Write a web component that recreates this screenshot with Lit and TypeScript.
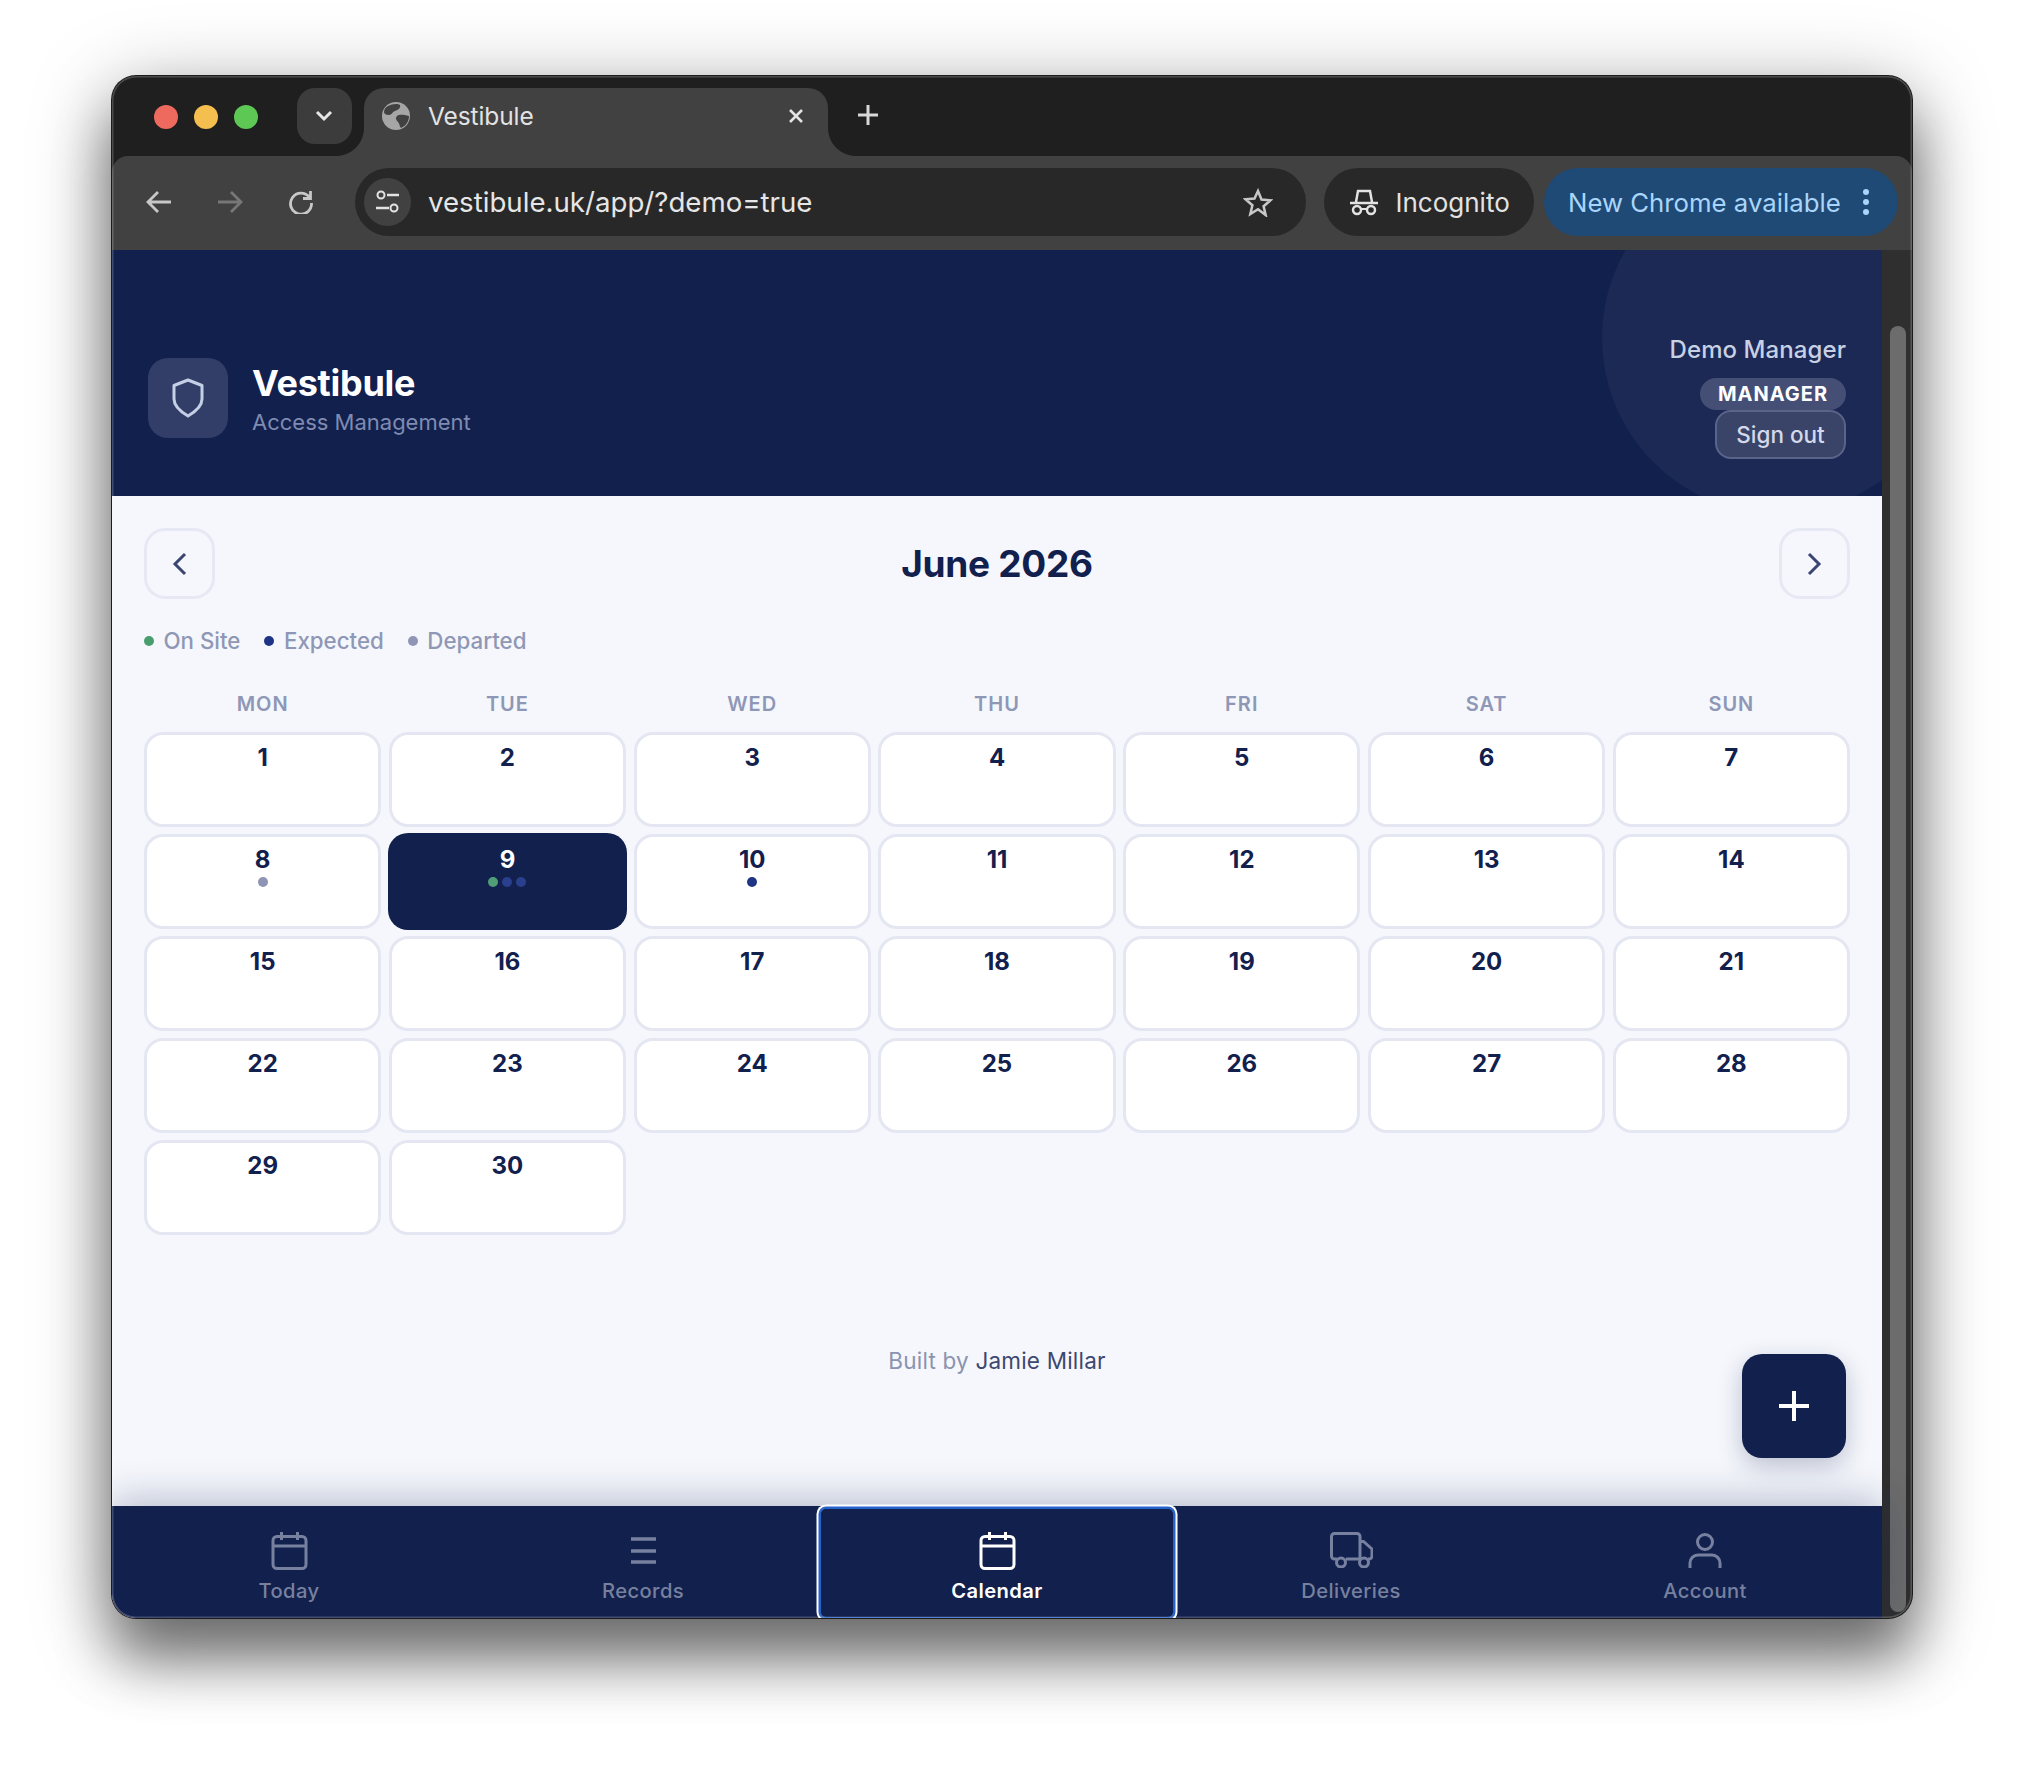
import { LitElement, html, css, svg } from "lit";
import { customElement } from "lit/decorators.js";

type Dot = "on" | "exp" | "dep";
const DAY_DOTS: Record<number, Dot[]> = { 8: ["dep"], 9: ["on", "exp", "exp"], 10: ["exp"] };
const WEEK = ["MON", "TUE", "WED", "THU", "FRI", "SAT", "SUN"];
const DAYS = Array.from({ length: 30 }, (_, i) => i + 1);

const calIcon = svg`<rect x="2" y="5.500" width="33" height="32" rx="4" fill="none" stroke="currentColor" stroke-width="3"/><path d="M2 15h33M10.500 1v8M26.500 1v8" fill="none" stroke="currentColor" stroke-width="3"/>`;

@customElement("app-root")
export class AppRoot extends LitElement {
  static styles = css`
    :host { display: block; width: 2024px; height: 1766px; background: #fff; padding: 76px 112px 148px 112px; box-sizing: border-box; font-family: Inter, "Liberation Sans", sans-serif; overflow: hidden; }
    * { box-sizing: border-box; }
    svg { display: block; flex: none; }
    .win { position: relative; height: 100%; border-radius: 24px; display: flex; flex-direction: column; background: #1f1f1f; box-shadow: 0 0 0 1px #1b1b1b, 0 44px 56px rgba(0,0,0,.42), 0 16px 80px rgba(0,0,0,.38); }
    .clip { flex: 1; min-height: 0; display: flex; flex-direction: column; overflow: hidden; border-radius: 24px; }
    .win::after { content: ""; position: absolute; inset: 0; border-radius: 24px; box-shadow: inset 0 0 0 1.500px rgba(255,255,255,.2); pointer-events: none; z-index: 5; }

    .strip { height: 80px; flex: none; background: #1f1f1f; display: flex; align-items: flex-start; padding: 12px 0 0 42px; }
    .lights { display: flex; gap: 16px; margin-top: 17px; width: 142.500px; }
    .light { width: 24px; height: 24px; border-radius: 50%; }
    .red { background: #ee6a5f; } .yellow { background: #f5bf4f; } .green { background: #5ec854; }
    .tabmenu { width: 55px; height: 56px; border-radius: 18px; background: #3c3c3c; display: flex; align-items: center; justify-content: center; position: relative; z-index: 1; color: #e6e6e6; }
    .tab { position: relative; margin-left: 12.500px; width: 464px; height: 68px; background: #414141; border-radius: 20px 20px 0 0; display: flex; align-items: flex-start; padding: 14px 24px 0 18px; color: #e3e3e3; font-size: 24.500px; }
    .tab::before, .tab::after { content: ""; position: absolute; bottom: 0; width: 28px; height: 28px; }
    .tab::before { left: -28px; background: radial-gradient(circle at 0 0, #1f1f1f 27.500px, #414141 28.500px); }
    .tab::after { right: -28px; background: radial-gradient(circle at 100% 0, #1f1f1f 27.500px, #414141 28.500px); }
    .tab-title { margin-left: 18px; flex: 1; line-height: 28px; letter-spacing: -.1px; }
    .tab-close { margin-top: 6px; }
    .newtab { margin: 16px 0 0 29px; color: #d8d8d8; }

    .toolbar { height: 94px; flex: none; background: #414141; border-radius: 16px 16px 0 0; display: flex; align-items: center; padding: 0 14px 2px 34px; }
    .navbtns { display: flex; align-items: center; width: 209px; gap: 45px; }
    .omni { width: 951px; height: 68px; border-radius: 34px; background: #282828; display: flex; align-items: center; padding: 0 33px 0 9px; color: #e6e6e6; }
    .site { width: 47px; height: 48px; border-radius: 50%; background: #414141; display: flex; align-items: center; justify-content: center; }
    .url { margin-left: 17px; flex: 1; font-size: 27.650px; white-space: nowrap; }
    .pill { height: 68px; border-radius: 34px; display: flex; align-items: center; white-space: nowrap; }
    .incog { width: 210px; margin-left: 18px; background: #282828; color: #e3e3e3; padding-left: 25px; gap: 16.500px; font-size: 26px; }
    .update { width: 354px; margin-left: 10px; background: #1f4a75; color: #a9d5fb; padding-left: 24px; gap: 22px; font-size: 25.750px; }
    .dots3 { display: flex; flex-direction: column; gap: 4px; }
    .dots3 i { display: block; width: 6px; height: 6px; border-radius: 50%; background: #a9d5fb; }

    .view { flex: 1; min-height: 0; display: flex; }
    .app { flex: 1; min-width: 0; display: flex; flex-direction: column; background: #f5f7fc; }
    .scroll { width: 30px; flex: none; background: #2f2f2f; padding: 76px 6px 6px 8px; }
    .thumb { height: 100%; border-radius: 8px; background: #6c6c6c; }

    .hdr { position: relative; overflow: hidden; height: 246px; flex: none; background: #12204e; display: flex; align-items: center; justify-content: space-between; padding: 50px 36px 0; }
    .hdr::before { content: ""; position: absolute; width: 352px; height: 352px; border-radius: 50%; right: -72px; top: -88px; background: rgba(255,255,255,.045); }
    .brand { display: flex; align-items: center; gap: 24px; position: relative; }
    .logo { width: 80px; height: 80px; border-radius: 20px; background: #323e68; display: flex; align-items: center; justify-content: center; }
    .title { color: #fff; font-size: 36px; font-weight: 700; line-height: 44px; letter-spacing: -.25px; }
    .sub { color: #7f8bb0; font-size: 22px; line-height: 28px; margin-top: 3px; }
    .user { display: flex; flex-direction: column; align-items: flex-end; position: relative; margin-top: -5px; }
    .uname { color: #c8d0e4; font-size: 24px; font-weight: 500; line-height: 36px; margin-bottom: 10px; letter-spacing: .08px; }
    .badge { height: 32px; width: 146px; border-radius: 16px; background: #454f76; color: #fff; font-size: 20px; font-weight: 700; letter-spacing: 1px; display: flex; align-items: center; justify-content: center; }
    .signout { height: 49px; width: 131px; border-radius: 16px; background: #3a4469; border: 2px solid #5a6489; color: #d3d9ea; font-size: 22.500px; font-weight: 500; display: flex; align-items: center; justify-content: center; }

    .main { position: relative; flex: 1; min-height: 0; padding: 32px 32px 0; }
    .mhead { display: flex; align-items: center; justify-content: space-between; }
    .arrow { width: 71px; height: 71px; border-radius: 21px; border: 3px solid #e6e9f3; display: flex; align-items: center; justify-content: center; color: #3a4672; }
    .month { color: #12204e; font-size: 37px; font-weight: 700; letter-spacing: -.3px; }
    .legend { display: flex; margin-top: 26.500px; height: 30px; align-items: center; color: #8f97b6; font-size: 22.300px; font-weight: 500; }
    .lg { display: flex; align-items: center; gap: 9.500px; margin-right: 24px; }
    .ldot { width: 10px; height: 10px; border-radius: 50%; }
    .on { background: #4a9e6e; } .exp { background: #1e3585; } .dep { background: #8f96b5; }
    .today .on { background: #4f9e78; } .today .exp { background: #2a3f8d; }
    .week { display: grid; grid-template-columns: repeat(7, 1fr); column-gap: 7.500px; margin-top: 36.500px; height: 40px; color: #8f97b6; font-size: 20px; font-weight: 600; letter-spacing: 1px; text-align: center; line-height: 24px; }
    .grid { display: grid; grid-template-columns: repeat(7, 1fr); column-gap: 7.500px; row-gap: 7px; grid-auto-rows: 95px; }
    .cell { background: #fff; border: 3px solid #e4e7f2; border-radius: 19px; display: flex; flex-direction: column; align-items: center; padding-top: 7.500px; color: #12204e; font-size: 24px; font-weight: 700; line-height: 30px; }
    .cell.today { background: #12204e; border-color: #12204e; color: #fff; box-shadow: 0 0 0 1px #12204e; }
    .ddots { display: flex; gap: 4px; margin-top: 2.500px; }
    .ddot { width: 10px; height: 10px; border-radius: 50%; }
    .foot { margin-top: 111px; text-align: center; font-size: 22.500px; line-height: 30px; color: #8a93b0; letter-spacing: .2px; }
    .foot b { font-weight: 400; color: #3d4870; }
    .fab { position: absolute; right: 36px; bottom: 48px; width: 104px; height: 104px; border-radius: 20px; background: #12204e; color: #fff; display: flex; align-items: center; justify-content: center; box-shadow: 0 8px 24px rgba(18,32,78,.25); }

    .nav { height: 112px; flex: none; background: #12204e; display: flex; position: relative; box-shadow: 0 -4px 40px rgba(18,32,78,.3); }
    .item { flex: 1; display: flex; flex-direction: column; align-items: center; padding-top: 24px; color: #77819f; font-size: 20.200px; font-weight: 500; letter-spacing: .4px; }
    .item .ic { height: 40px; display: flex; align-items: center; justify-content: center; }
    .item span { line-height: 28px; margin-top: 6.500px; }
    .item.active { color: #fff; font-weight: 600; border-radius: 6px; position: relative; z-index: 1; margin-top: 1.500px; padding-top: 22.500px; box-shadow: inset 0 0 0 1px #2463c9, 0 0 0 1.500px #2463c9, 0 0 0 3.500px #fff; }
  `;

  private dayCell(d: number) {
    const dots = DAY_DOTS[d] ?? [];
    return html`<div class="cell ${d === 9 ? "today" : ""}">
      ${d}
      ${dots.length ? html`<div class="ddots">${dots.map((k) => html`<i class="ddot ${k}"></i>`)}</div>` : ""}
    </div>`;
  }

  private navItem(label: string, icon: unknown, w: number, h: number, active = false) {
    return html`<div class="item ${active ? "active" : ""}">
      <div class="ic"><svg width=${w} height=${h} viewBox="0 0 ${w} ${h}">${icon}</svg></div>
      <span>${label}</span>
    </div>`;
  }

  render() {
    const records = svg`<path d="M0 2h25M0 14h25M0 25h25" stroke="currentColor" stroke-width="3.500" fill="none"/>`;
    const truck = svg`<path d="M7 27H4.500A3 3 0 0 1 1.500 24V4.500A3 3 0 0 1 4.500 1.500H27A3 3 0 0 1 30 4.500V27H16M30 9.500h3.500L42 17v7a3 3 0 0 1-3 3h-1" fill="none" stroke="currentColor" stroke-width="3"/><circle cx="11" cy="30.500" r="4.500" fill="none" stroke="currentColor" stroke-width="3"/><circle cx="34" cy="30.500" r="4.500" fill="none" stroke="currentColor" stroke-width="3"/>`;
    const person = svg`<circle cx="17" cy="9" r="7.500" fill="none" stroke="currentColor" stroke-width="3"/><path d="M2 35v-5a8 8 0 0 1 8-8h14a8 8 0 0 1 8 8v5" fill="none" stroke="currentColor" stroke-width="3"/>`;
    return html`
      <div class="win"><div class="clip">
        <div class="strip">
          <div class="lights"><div class="light red"></div><div class="light yellow"></div><div class="light green"></div></div>
          <div class="tabmenu"><svg width="18" height="12" viewBox="0 0 18 12"><path d="M2 2l7 7 7-7" fill="none" stroke="currentColor" stroke-width="3"/></svg></div>
          <div class="tab">
            <svg width="28" height="28" viewBox="0 0 28 28"><circle cx="14" cy="14" r="14" fill="#a6a6a6"/><path d="M6 4c4-2 9-3 12-1 1 3-2 5-5 6-3 1-3 4-6 4-3 0-5-1-5-3 0-3 2-5 4-6zM15 14c3-2 7-1 12 0 0 5-3 10-8 12-2-2-1-4-3-6-2-2-3-4-1-6z" fill="#414141"/></svg>
            <div class="tab-title">Vestibule</div>
            <svg class="tab-close" width="16" height="16" viewBox="0 0 16 16"><path d="M2 2l12 12M14 2L2 14" stroke="#e3e3e3" stroke-width="2.500"/></svg>
          </div>
          <svg class="newtab" width="22" height="22" viewBox="0 0 22 22"><path d="M11 1v20M1 11h20" stroke="currentColor" stroke-width="3"/></svg>
        </div>
        <div class="toolbar">
          <div class="navbtns">
            <svg width="26" height="24" viewBox="0 0 26 24"><path d="M25 12H2M12 2L2 12l10 10" fill="none" stroke="#c8c8c8" stroke-width="2.800"/></svg>
            <svg width="26" height="24" viewBox="0 0 26 24"><path d="M1 12h23M14 2l10 10-10 10" fill="none" stroke="#777" stroke-width="2.800"/></svg>
            <svg width="26" height="24" viewBox="0 0 26 24"><path d="M21.500 7.500A10.500 10.500 0 1 0 23.500 13M22.500 1v7.500H15" fill="none" stroke="#c8c8c8" stroke-width="2.800"/></svg>
          </div>
          <div class="omni">
            <div class="site"><svg width="26" height="24" viewBox="0 0 26 24"><circle cx="6" cy="5" r="3.500" fill="none" stroke="#e3e3e3" stroke-width="2"/><path d="M12 5h12M1 18h13" stroke="#e3e3e3" stroke-width="2.500"/><circle cx="19" cy="18" r="3.500" fill="none" stroke="#e3e3e3" stroke-width="2"/></svg></div>
            <div class="url">vestibule.uk/app/?demo=true</div>
            <svg width="30" height="29" viewBox="0 0 30 29"><path d="M15 3l3.500 8.500 9 .8-6.900 5.900 2.100 8.900L15 21.300l-7.700 4.800 2.100-8.900-6.900-5.900 9-.8z" fill="none" stroke="#c8c8c8" stroke-width="2.500"/></svg>
          </div>
          <div class="pill incog">
            <svg width="30" height="27" viewBox="0 0 30 27"><path d="M7 13l2-11h12l2 11M1 14h28" fill="none" stroke="#e3e3e3" stroke-width="2.500"/><circle cx="8" cy="21" r="4" fill="none" stroke="#e3e3e3" stroke-width="2.500"/><circle cx="22" cy="21" r="4" fill="none" stroke="#e3e3e3" stroke-width="2.500"/><path d="M12 20h6" stroke="#e3e3e3" stroke-width="2"/></svg>
            <span>Incognito</span>
          </div>
          <div class="pill update">
            <span>New Chrome available</span>
            <div class="dots3"><i></i><i></i><i></i></div>
          </div>
        </div>
        <div class="view">
          <div class="app">
            <div class="hdr">
              <div class="brand">
                <div class="logo"><svg width="32" height="40" viewBox="0 0 32 40"><path d="M16 2L30 7.500V21C30 28 22 34.500 16 38 10 34.500 2 28 2 21V7.500z" fill="none" stroke="#c5cfe6" stroke-width="3" stroke-linejoin="round"/></svg></div>
                <div>
                  <div class="title">Vestibule</div>
                  <div class="sub">Access Management</div>
                </div>
              </div>
              <div class="user">
                <div class="uname">Demo Manager</div>
                <div class="badge">MANAGER</div>
                <div class="signout">Sign out</div>
              </div>
            </div>
            <div class="main">
              <div class="mhead">
                <div class="arrow"><svg width="16" height="24" viewBox="0 0 16 24"><path d="M13 2L3 12l10 10" fill="none" stroke="currentColor" stroke-width="3"/></svg></div>
                <div class="month">June 2026</div>
                <div class="arrow"><svg width="16" height="24" viewBox="0 0 16 24"><path d="M3 2l10 10L3 22" fill="none" stroke="currentColor" stroke-width="3"/></svg></div>
              </div>
              <div class="legend">
                <div class="lg"><i class="ldot on"></i>On Site</div>
                <div class="lg"><i class="ldot exp"></i>Expected</div>
                <div class="lg"><i class="ldot dep"></i>Departed</div>
              </div>
              <div class="week">${WEEK.map((w) => html`<div>${w}</div>`)}</div>
              <div class="grid">${DAYS.map((d) => this.dayCell(d))}</div>
              <div class="foot">Built by <b>Jamie Millar</b></div>
              <div class="fab"><svg width="30" height="30" viewBox="0 0 30 30"><path d="M15 0v30M0 15h30" stroke="#fff" stroke-width="4"/></svg></div>
            </div>
            <div class="nav">
              ${this.navItem("Today", calIcon, 37, 39)}
              ${this.navItem("Records", records, 25, 27)}
              ${this.navItem("Calendar", calIcon, 37, 39, true)}
              ${this.navItem("Deliveries", truck, 43, 36)}
              ${this.navItem("Account", person, 34, 35)}
            </div>
          </div>
          <div class="scroll"><div class="thumb"></div></div>
        </div>
      </div></div>
    `;
  }
}
